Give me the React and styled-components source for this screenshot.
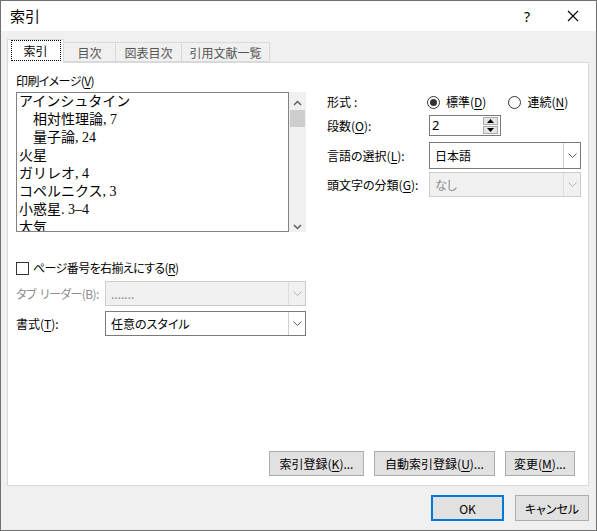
import React from 'react';
import styled, { createGlobalStyle } from 'styled-components';

const Global = createGlobalStyle`
  html, body { margin: 0; padding: 0; background: #ffffff; }
  body {
    font-family: "Noto Sans CJK JP", "Noto Sans", sans-serif;
    font-size: 12px;
    color: #000;
    font-feature-settings: "palt";
  }
  * { box-sizing: border-box; }
`;

const Window = styled.div`
  width: 597px;
  height: 531px;
  border: 1px solid #707070;
  background: #f0f0f0;
  display: flex;
  flex-direction: column;
`;

const TitleBar = styled.div`
  height: 30px;
  background: #ffffff;
  display: flex;
  align-items: center;
  padding-left: 9px;
  flex-shrink: 0;
`;

const TitleText = styled.div`
  flex: 1;
  font-size: 15px;
  line-height: 20px;
`;

const TitleButton = styled.div`
  width: 46px;
  height: 30px;
  display: flex;
  align-items: center;
  justify-content: center;
  font-family: "Noto Sans", sans-serif;
  font-size: 14px;
`;

const Body = styled.div`
  flex: 1;
  display: flex;
  flex-direction: column;
  padding: 8px 7px 0 6px;
`;

const TabRow = styled.div`
  display: flex;
  align-items: flex-end;
  height: 23px;
  position: relative;
  z-index: 1;
`;

const Tab = styled.div`
  width: ${p => p.$w}px;
  height: ${p => (p.$active ? 24 : 20)}px;
  margin-bottom: ${p => (p.$active ? -1 : 0)}px;
  margin-left: ${p => (p.$first ? 0 : -1)}px;
  background: ${p => (p.$active ? '#ffffff' : '#f0f0f0')};
  border: 1px solid #d9d9d9;
  border-bottom: ${p => (p.$active ? 'none' : '1px solid #d9d9d9')};
  display: flex;
  align-items: center;
  justify-content: center;
  color: ${p => (p.$active ? '#000' : '#555')};
  padding-bottom: ${p => (p.$active ? 2 : 0)}px;
`;

const FocusRect = styled.span`
  display: inline-flex;
  align-items: center;
  justify-content: center;
  width: 48px;
  height: 19px;
  outline: 1px dotted #000;
  outline-offset: 0;
`;

const Panel = styled.div`
  width: 582px;
  height: 424px;
  background: #ffffff;
  border: 1px solid #d9d9d9;
  padding: 10px 7px 9px 8px;
  display: flex;
  flex-direction: column;
`;

const TopSection = styled.div`
  display: grid;
  grid-template-columns: 290px 254px;
  column-gap: 21px;
`;

const LeftCol = styled.div`
  display: flex;
  flex-direction: column;
`;

const RightCol = styled.div`
  display: flex;
  flex-direction: column;
  padding-top: 21px;
`;

const Label = styled.div`
  line-height: 16px;
  color: ${p => (p.$disabled ? '#8d8d8d' : '#000')};
  white-space: nowrap;
  letter-spacing: ${p => (p.$tight ? '-0.6px' : 'normal')};
`;

const Acc = styled.span`
  text-decoration: ${p => (p.$off ? 'none' : 'underline')};
  text-underline-offset: 2px;
`;

const Gap = styled.span`
  display: inline-block;
  width: ${p => p.$w}px;
`;

const PreviewWrap = styled.div`
  display: flex;
  margin-top: 3px;
  height: 140px;
`;

const Preview = styled.div`
  width: 273px;
  height: 140px;
  border: 1px solid #828282;
  overflow: hidden;
  padding-left: 2px;
  font-family: "Liberation Serif", "Noto Sans CJK JP", serif;
  font-size: 14px;
  font-feature-settings: normal;
`;

const PreviewLine = styled.div`
  line-height: 18px;
  height: 18px;
  padding-left: ${p => (p.$indent ? 14 : 0)}px;
  white-space: nowrap;
`;

const Scrollbar = styled.div`
  width: 17px;
  height: 140px;
  background: #f0f0f0;
  display: flex;
  flex-direction: column;
  align-items: center;
  padding-top: 5px;
`;

const ScrollArrow = styled.div`
  height: 11px;
  width: 17px;
  display: flex;
  align-items: center;
  justify-content: center;
`;

const Thumb = styled.div`
  width: 15px;
  height: 17px;
  background: #cdcdcd;
  margin-top: 2px;
`;

const ScrollSpacer = styled.div`
  flex: 1;
`;

const FieldRow = styled.div`
  display: grid;
  grid-template-columns: ${p => p.$label}px 1fr;
  align-items: center;
  height: ${p => p.$h}px;
  margin-top: ${p => p.$mt || 0}px;
`;

const RadioGroup = styled.div`
  display: flex;
  align-items: center;
  gap: 22px;
`;

const RadioItem = styled.label`
  display: flex;
  align-items: center;
  gap: 6px;
  line-height: 16px;
`;

const RadioCircle = styled.span`
  width: 13px;
  height: 13px;
  border-radius: 50%;
  border: 1px solid #333;
  display: flex;
  align-items: center;
  justify-content: center;
  &::after {
    content: '';
    width: 7px;
    height: 7px;
    border-radius: 50%;
    background: ${p => (p.$checked ? '#333' : 'transparent')};
  }
`;

const SpinBox = styled.div`
  width: 72px;
  height: 21px;
  border: 1px solid #7a7a7a;
  display: flex;
  align-items: center;
  padding: 1px 2px 1px 2px;
  font-family: "Noto Sans", sans-serif;
  font-size: 13px;
`;

const SpinValue = styled.div`
  flex: 1;
  line-height: 17px;
`;

const SpinButtons = styled.div`
  display: flex;
  flex-direction: column;
  gap: 1px;
`;

const SpinBtn = styled.div`
  width: 15px;
  height: 8px;
  background: #e6e6e6;
  border: 1px solid #adadad;
  display: flex;
  align-items: center;
  justify-content: center;
`;

const Select = styled.div`
  height: ${p => p.$h}px;
  border: 1px solid ${p => (p.$disabled ? '#cccccc' : '#7a7a7a')};
  background: ${p => (p.$disabled ? '#f0f0f0' : '#ffffff')};
  display: flex;
  align-items: stretch;
`;

const SelectText = styled.div`
  flex: 1;
  display: flex;
  align-items: center;
  padding-left: 5px;
  color: ${p => (p.$disabled ? '#8d8d8d' : '#000')};
`;

const DropBtn = styled.div`
  width: 17px;
  border-left: 1px solid ${p => (p.$disabled ? '#dcdcdc' : '#d0d0d0')};
  display: flex;
  align-items: center;
  justify-content: center;
`;

const LowerSection = styled.div`
  width: 290px;
  display: flex;
  flex-direction: column;
  margin-top: 28px;
`;

const CheckRow = styled.label`
  display: flex;
  align-items: center;
  gap: 4px;
  height: 16px;
  line-height: 16px;
`;

const CheckBox = styled.span`
  width: 13px;
  height: 13px;
  border: 1px solid #333;
  background: #fff;
`;

const ActionRow = styled.div`
  margin-top: auto;
  display: flex;
  justify-content: flex-end;
  gap: 10px;
  padding-right: ${p => p.$pr || 0}px;
`;

const Button = styled.div`
  width: ${p => p.$w}px;
  height: ${p => p.$h || 25}px;
  background: #e1e1e1;
  border: 1px solid ${p => (p.$primary ? '#0078d7' : '#adadad')};
  box-shadow: ${p => (p.$primary ? 'inset 0 0 0 1px #0078d7' : 'none')};
  display: flex;
  align-items: center;
  justify-content: center;
  white-space: nowrap;
`;

const DialogButtons = styled.div`
  display: flex;
  justify-content: flex-end;
  gap: 11px;
  margin-top: 9px;
`;

const Chevron = ({ up, color = '#606060' }) => (
  <svg width="9" height="6" viewBox="0 0 9 6">
    <polyline
      points={up ? '1,5 4.5,1.5 8,5' : '1,1 4.5,4.5 8,1'}
      fill="none"
      stroke={color}
      strokeWidth="1.5"
    />
  </svg>
);

const DropChevron = ({ color }) => (
  <svg width="9" height="5" viewBox="0 0 9 5">
    <polyline points="0.5,0.5 4.5,4.5 8.5,0.5" fill="none" stroke={color} strokeWidth="1" />
  </svg>
);

const Tri = ({ up }) => (
  <svg width="7" height="4" viewBox="0 0 7 4">
    <polygon points={up ? '3.5,0 7,4 0,4' : '0,0 7,0 3.5,4'} fill="#000" />
  </svg>
);

const CloseIcon = () => (
  <svg width="12" height="12" viewBox="0 0 12 12">
    <path d="M1 1 L11 11 M11 1 L1 11" stroke="#000" strokeWidth="1.1" fill="none" />
  </svg>
);

const DropSelect = ({ h, disabled, children }) => (
  <Select $h={h} $disabled={disabled}>
    <SelectText $disabled={disabled}>{children}</SelectText>
    <DropBtn $disabled={disabled}>
      <DropChevron color={disabled ? '#b5b5b5' : '#606060'} />
    </DropBtn>
  </Select>
);

const previewLines = [
  { t: 'アインシュタイン' },
  { t: '相対性理論, 7', indent: true },
  { t: '量子論, 24', indent: true },
  { t: '火星' },
  { t: 'ガリレオ, 4' },
  { t: 'コペルニクス, 3' },
  { t: '小惑星. 3–4' },
  { t: '大気' },
];

export default function App() {
  return (
    <>
      <Global />
      <Window>
        <TitleBar>
          <TitleText>索引</TitleText>
          <TitleButton>?</TitleButton>
          <TitleButton>
            <CloseIcon />
          </TitleButton>
        </TitleBar>
        <Body>
          <TabRow>
            <Tab $w={57} $active $first>
              <FocusRect>索引</FocusRect>
            </Tab>
            <Tab $w={53}>目次</Tab>
            <Tab $w={67}>図表目次</Tab>
            <Tab $w={89}>引用文献一覧</Tab>
          </TabRow>
          <Panel>
            <TopSection>
              <LeftCol>
                <Label $tight>
                  印刷イメージ(<Acc>V</Acc>)
                </Label>
                <PreviewWrap>
                  <Preview>
                    {previewLines.map((l, i) => (
                      <PreviewLine key={i} $indent={l.indent}>
                        {l.t}
                      </PreviewLine>
                    ))}
                  </Preview>
                  <Scrollbar>
                    <ScrollArrow>
                      <Chevron up />
                    </ScrollArrow>
                    <Thumb />
                    <ScrollSpacer />
                    <ScrollArrow>
                      <Chevron />
                    </ScrollArrow>
                  </Scrollbar>
                </PreviewWrap>
              </LeftCol>
              <RightCol>
                <FieldRow $label={100} $h={16}>
                  <Label>
                    形式<Gap $w={3} />:
                  </Label>
                  <RadioGroup>
                    <RadioItem>
                      <RadioCircle $checked />
                      <span>
                        標準(<Acc>D</Acc>)
                      </span>
                    </RadioItem>
                    <RadioItem>
                      <RadioCircle />
                      <span>
                        連続(<Acc>N</Acc>)
                      </span>
                    </RadioItem>
                  </RadioGroup>
                </FieldRow>
                <FieldRow $label={102} $h={21} $mt={5}>
                  <Label>
                    段数(<Acc>O</Acc>):
                  </Label>
                  <SpinBox>
                    <SpinValue>2</SpinValue>
                    <SpinButtons>
                      <SpinBtn>
                        <Tri up />
                      </SpinBtn>
                      <SpinBtn>
                        <Tri />
                      </SpinBtn>
                    </SpinButtons>
                  </SpinBox>
                </FieldRow>
                <FieldRow $label={102} $h={27} $mt={6}>
                  <Label>
                    言語の選択(<Acc>L</Acc>):
                  </Label>
                  <DropSelect h={27}>日本語</DropSelect>
                </FieldRow>
                <FieldRow $label={102} $h={25} $mt={3}>
                  <Label>
                    頭文字の分類(<Acc>G</Acc>):
                  </Label>
                  <DropSelect h={25} disabled>
                    なし
                  </DropSelect>
                </FieldRow>
              </RightCol>
            </TopSection>
            <LowerSection>
              <CheckRow>
                <CheckBox />
                <Label $tight>
                  ページ番号を右揃えにする(<Acc>R</Acc>)
                </Label>
              </CheckRow>
              <FieldRow $label={89} $h={25} $mt={5}>
                <Label $disabled $tight>
                  タブ<Gap $w={4} />リーダー(B):
                </Label>
                <DropSelect h={25} disabled>
                  .......
                </DropSelect>
              </FieldRow>
              <FieldRow $label={89} $h={25} $mt={5}>
                <Label>
                  書式(<Acc>T</Acc>):
                </Label>
                <DropSelect h={25}>任意のスタイル</DropSelect>
              </FieldRow>
            </LowerSection>
            <ActionRow $pr={6}>
              <Button $w={95}>
                索引登録(<Acc>K</Acc>)...
              </Button>
              <Button $w={121}>
                自動索引登録(<Acc>U</Acc>)...
              </Button>
              <Button $w={70}>
                変更(<Acc>M</Acc>)...
              </Button>
            </ActionRow>
          </Panel>
          <DialogButtons>
            <Button $w={73} $h={26} $primary>
              OK
            </Button>
            <Button $w={74} $h={26}>
              キャンセル
            </Button>
          </DialogButtons>
        </Body>
      </Window>
    </>
  );
}
